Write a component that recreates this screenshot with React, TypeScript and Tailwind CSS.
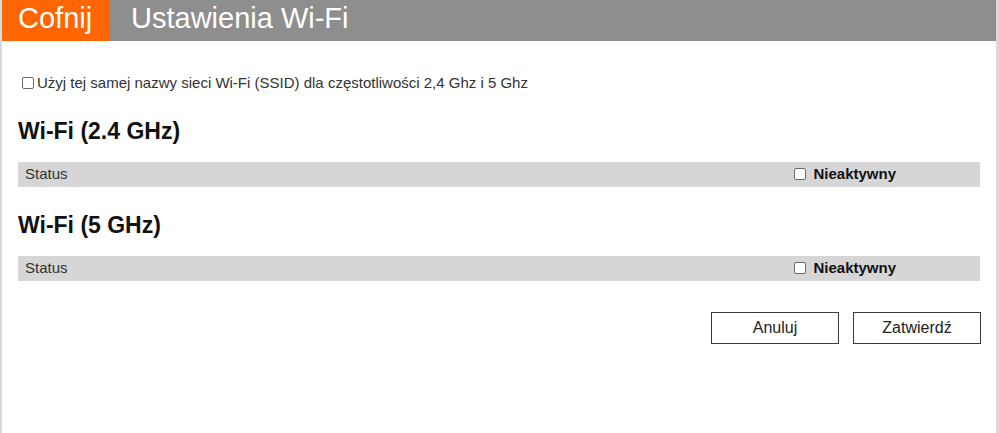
const Box = () => (
  <span className="inline-block w-[12px] h-[12px] border border-[#6b6b6b] rounded-[2px] bg-white shrink-0" />
);

const StatusBar = () => (
  <div className="mt-[18px] h-[25px] bg-[#d6d6d6] flex items-center justify-between pl-[7px] pr-[84px] text-[15px] text-[#333]">
    <span>Status</span>
    <label className="flex items-center gap-[7px]">
      <Box />
      <span className="font-bold text-[#111]">Nieaktywny</span>
    </label>
  </div>
);

export default function App() {
  return (
    <div
      className="w-[999px] h-[433px] bg-white border-l-2 border-r-[3px] border-[#dadada] overflow-hidden"
      style={{ fontFamily: '"Liberation Sans", Arial, sans-serif' }}
    >
      <header className="h-[41px] flex bg-[#8e8e8e] text-white text-[29px] leading-[33px]">
        <div className="w-[108px] bg-[#ff6600] pl-[16px] pt-[2px]">Cofnij</div>
        <div className="pl-[21px] pt-[2px]">Ustawienia Wi-Fi</div>
      </header>

      <main className="px-[16px]">
        <label className="mt-[31px] flex items-center gap-[3px] pl-[4px] text-[15px] text-[#333]">
          <Box />
          <span>Użyj tej samej nazwy sieci Wi-Fi (SSID) dla częstotliwości 2,4 Ghz i 5 Ghz</span>
        </label>

        <h2 className="mt-[23px] text-[23px] leading-[26px] font-bold text-[#111]">Wi-Fi (2.4 GHz)</h2>
        <StatusBar />

        <h2 className="mt-[25px] text-[23px] leading-[26px] font-bold text-[#111]">Wi-Fi (5 GHz)</h2>
        <StatusBar />

        <div className="mt-[31px] flex justify-end gap-[14px] -mr-[1px]">
          <button className="w-[128px] h-[32px] border border-[#3a3a3a] bg-white text-[16px] text-[#222]">
            Anuluj
          </button>
          <button className="w-[128px] h-[32px] border border-[#3a3a3a] bg-white text-[16px] text-[#222]">
            Zatwierdź
          </button>
        </div>
      </main>
    </div>
  );
}
